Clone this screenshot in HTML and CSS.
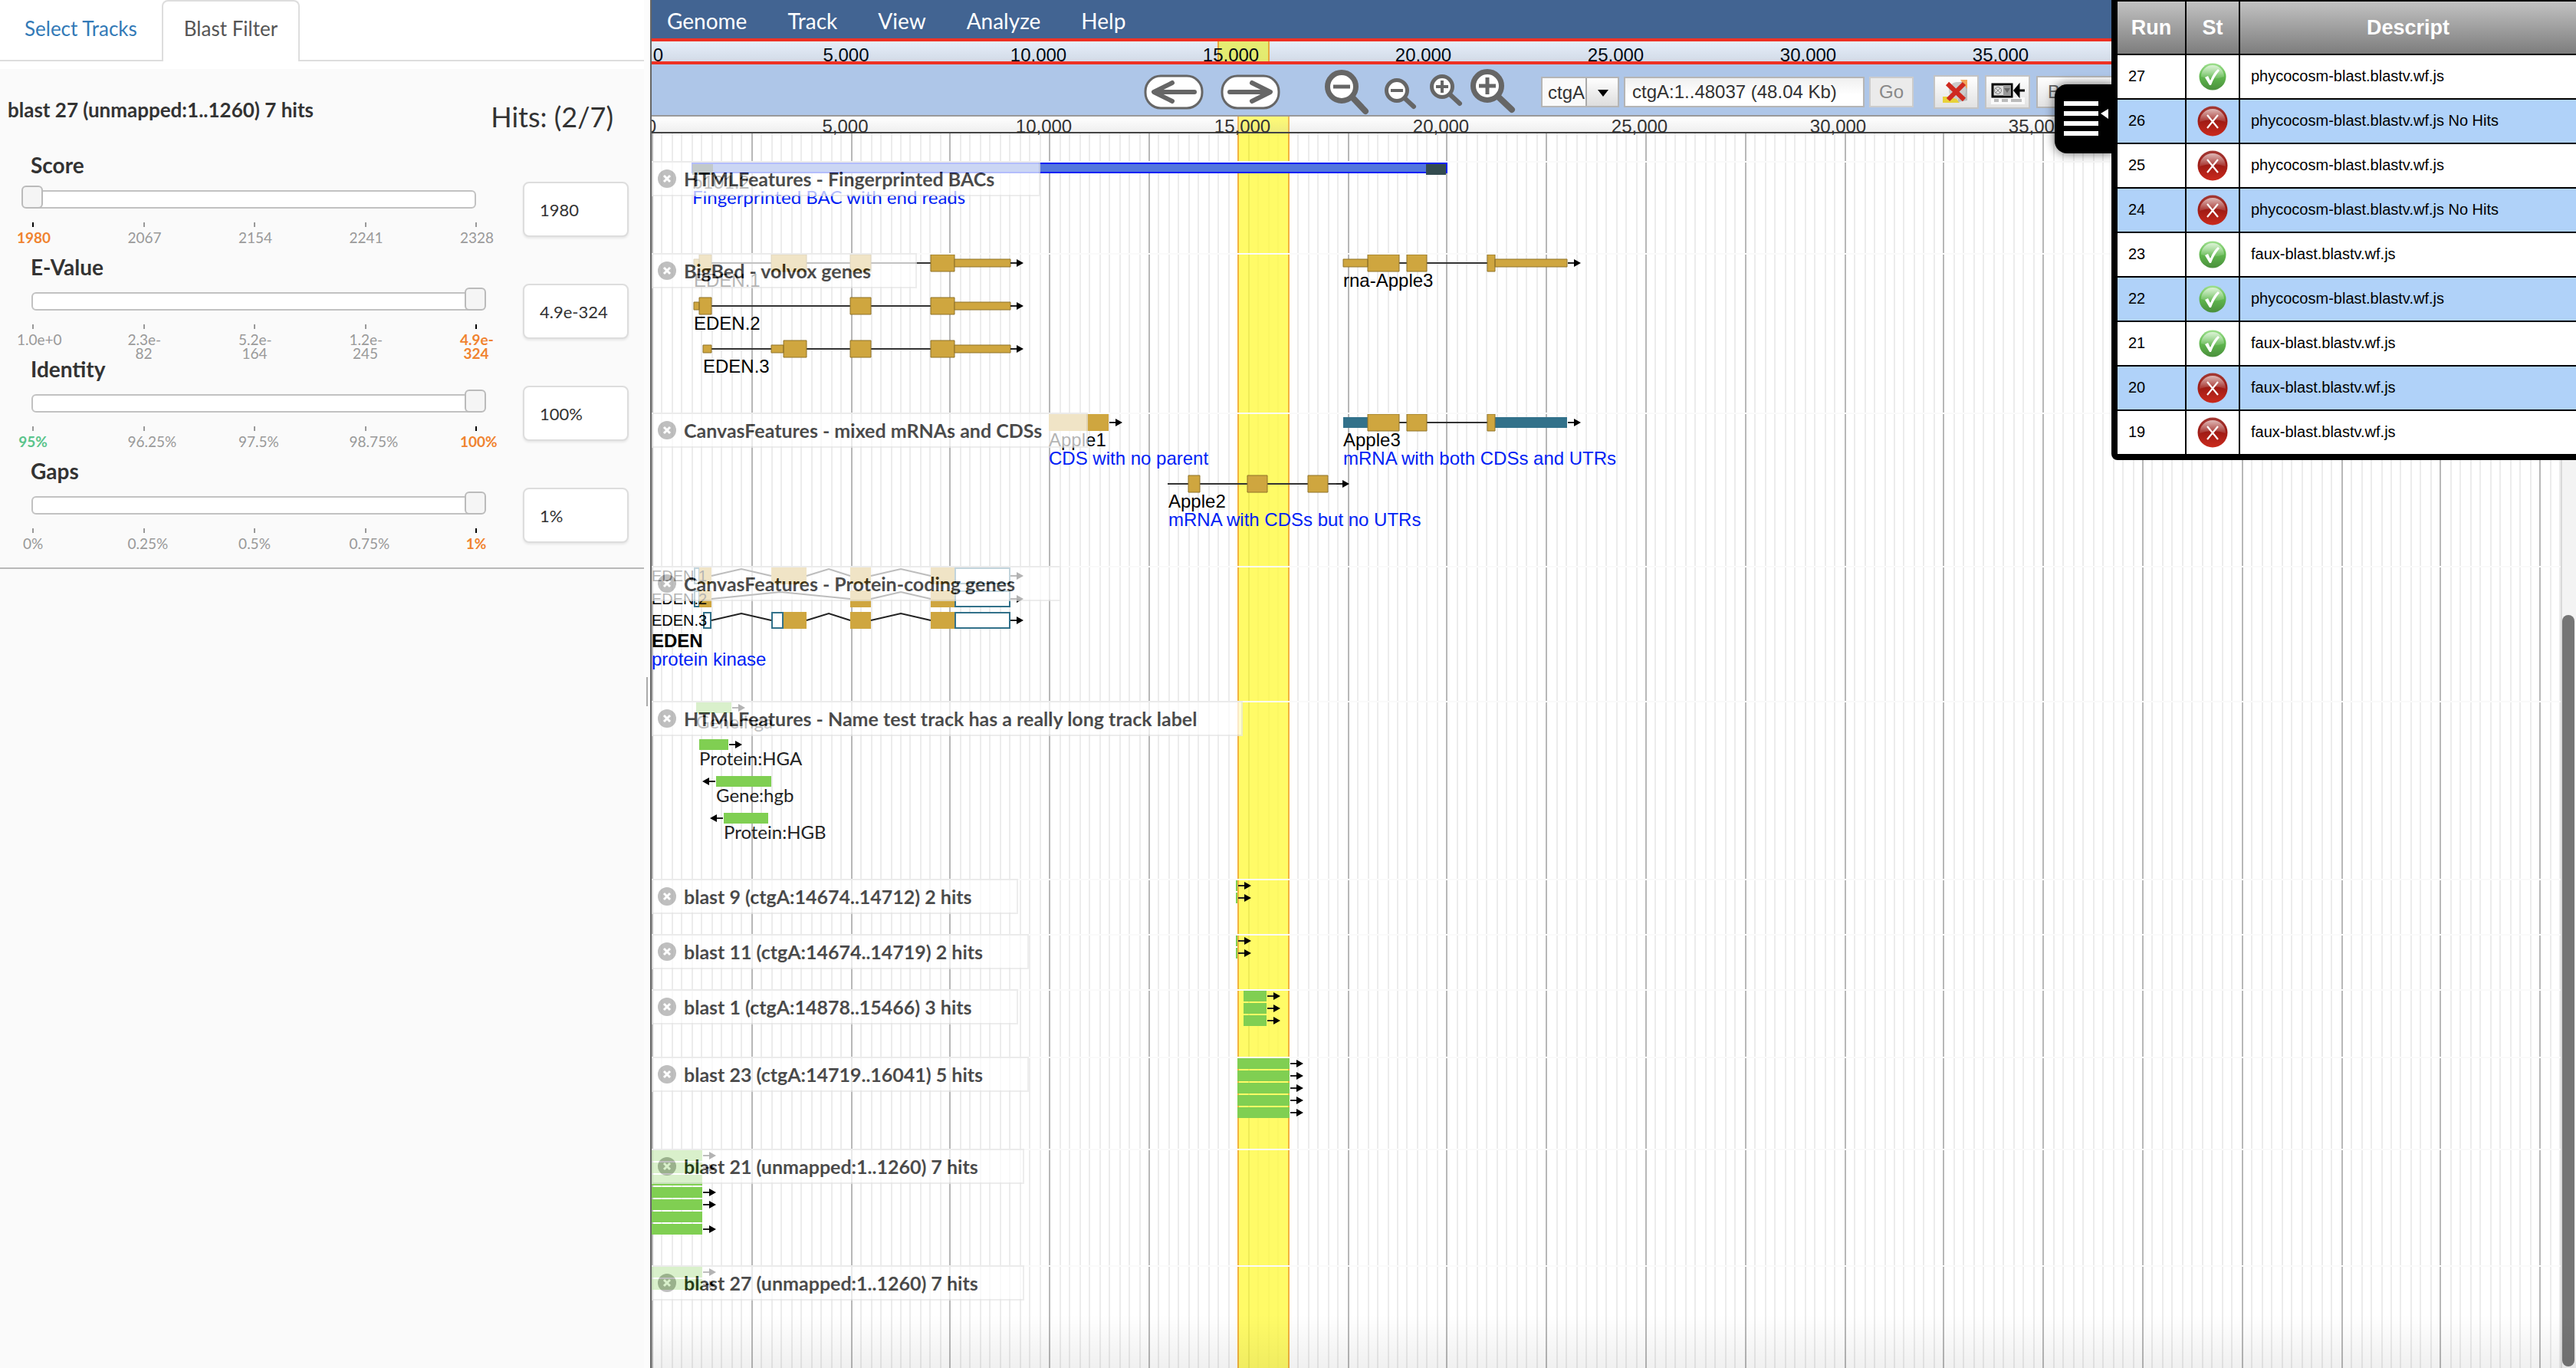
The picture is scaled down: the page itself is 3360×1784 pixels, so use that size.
FILE: index.html
```html
<!DOCTYPE html>
<html lang="en">
<head>
<meta charset="utf-8">
<title>Genome browser - blast filter</title>
<link rel="stylesheet" href="styles.css">
</head>
<body>
<svg class="defs" aria-hidden="true">
  <defs>
    <linearGradient id="green" x1="0" y1="0" x2="0" y2="1"><stop offset="0" stop-color="#9fe08f"/><stop offset=".45" stop-color="#62bb50"/><stop offset="1" stop-color="#4a8f3c"/></linearGradient>
    <linearGradient id="red" x1="0" y1="0" x2="0" y2="1"><stop offset="0" stop-color="#a33a35"/><stop offset=".45" stop-color="#9c1a14"/><stop offset="1" stop-color="#cb2a1d"/></linearGradient>
    <linearGradient id="gloss" x1="0" y1="0" x2="0" y2="1"><stop offset="0" stop-color="#fff" stop-opacity=".65"/><stop offset="1" stop-color="#fff" stop-opacity=".1"/></linearGradient>
    <symbol id="ok" viewBox="0 0 40 40"><circle cx="20" cy="20" r="17.5" fill="url(#green)"/><path d="M5 20a15 15 0 0 1 30 0q-15 5-30 0z" fill="url(#gloss)"/><path d="M10 21l4-2 3 6Q21 15 27 10l2 2Q22 20 18 31h-2z" fill="#fff"/></symbol>
    <symbol id="fail" viewBox="0 0 40 40"><circle cx="20" cy="20" r="19.5" fill="url(#red)"/><path d="M3 21a17 17 0 0 1 34 0q-17-6-34 0z" fill="url(#gloss)"/><path d="M13 12l14 17M27 12L13 29" stroke="#fff" stroke-width="2.2"/></symbol>
    <symbol id="close" viewBox="0 0 24 24"><circle cx="12" cy="12" r="12" fill="#a5a5a5"/><path d="M8 8l8 8M16 8l-8 8" stroke="#fff" stroke-width="3"/></symbol>
    <g id="arrow"><path d="M0 0h12" stroke="#222" stroke-width="2"/><path d="M8-5l9 5-9 5z"/></g>
    <g id="arrow-left"><path d="M0 0h-12" stroke="#222" stroke-width="2"/><path d="M-8-5l-9 5 9 5z"/></g>
    <g id="gene-tail"><path class="cds" d="M364-11h31v22h-31z"/><path class="cds" d="M395-5h73V5h-73z"/><use href="#arrow" x="468"/></g>
    <g id="coding-tail"><path class="box" d="M259-11h27v22h-27zM364-11h31v22h-31z"/><path class="utr" d="M396-10h71v20h-71z"/><path class="intron" d="M286 0l39-9 39 9"/><use href="#arrow" x="468"/></g>
  </defs>
</svg>

<div class="app">
  <aside class="side">
    <nav class="tabs">
      <a class="tab" href="#tracks">Select Tracks</a>
      <a class="tab tab-on" href="#filter">Blast Filter</a>
    </nav>
    <section class="filter">
      <header class="filter-head">
        <h2 class="filter-title">blast 27 (unmapped:1..1260) 7 hits</h2>
        <span class="hits">Hits: (2/7)</span>
      </header>
      <div class="control">
        <div class="scale">
          <label class="name" for="score">Score</label>
          <div class="slider"><input id="score" type="range" min="1980" max="2328" value="1980"></div>
          <ol class="pips"><li class="now">1980</li><li>2067</li><li>2154</li><li>2241</li><li>2328</li></ol>
        </div>
        <input class="value" type="text" value="1980" aria-label="Score value">
      </div>
      <div class="control">
        <div class="scale">
          <label class="name" for="evalue">E-Value</label>
          <div class="slider"><input id="evalue" type="range" min="0" max="324" value="324"></div>
          <ol class="pips"><li>1.0e+0</li><li>2.3e-82</li><li>5.2e-164</li><li>1.2e-245</li><li class="now">4.9e-324</li></ol>
        </div>
        <input class="value" type="text" value="4.9e-324" aria-label="E-Value value">
      </div>
      <div class="control">
        <div class="scale">
          <label class="name" for="identity">Identity</label>
          <div class="slider"><input id="identity" type="range" min="95" max="100" value="100"></div>
          <ol class="pips"><li class="low">95%</li><li>96.25%</li><li>97.5%</li><li>98.75%</li><li class="now">100%</li></ol>
        </div>
        <input class="value" type="text" value="100%" aria-label="Identity value">
      </div>
      <div class="control">
        <div class="scale">
          <label class="name" for="gaps">Gaps</label>
          <div class="slider"><input id="gaps" type="range" min="0" max="1" value="1"></div>
          <ol class="pips"><li>0%</li><li>0.25%</li><li>0.5%</li><li>0.75%</li><li class="now">1%</li></ol>
        </div>
        <input class="value" type="text" value="1%" aria-label="Gaps value">
      </div>
    </section>
  </aside>
  <div class="splitter"><i class="grip"></i></div>

  <main class="browser">
    <nav class="menu">
      <button>Genome</button><button>Track</button><button>View</button><button>Analyze</button><button>Help</button>
    </nav>
    <div class="overview">
      <i class="region"></i>
      <span class="origin">0</span><span>5,000</span><span>10,000</span><span>15,000</span><span>20,000</span><span>25,000</span><span>30,000</span><span>35,000</span>
    </div>
    <div class="toolbar">
      <div class="pan">
        <button class="icon" aria-label="Pan left"><svg width="78" height="46"><rect x="2" y="2" width="74" height="42" rx="20" fill="#fff" stroke="#666" stroke-width="3"/><path d="M66 23H14M37 11L13 23l24 12" fill="none" stroke="#666" stroke-width="6" stroke-linecap="round" stroke-linejoin="round"/></svg></button>
        <button class="icon" aria-label="Pan right"><svg width="78" height="46"><rect x="2" y="2" width="74" height="42" rx="20" fill="#fff" stroke="#666" stroke-width="3"/><path d="M12 23h52M41 11l24 12-24 12" fill="none" stroke="#666" stroke-width="6" stroke-linecap="round" stroke-linejoin="round"/></svg></button>
      </div>
      <div class="zoom">
        <button class="icon" aria-label="Zoom out far"><svg width="58" height="58"><path d="M36 36l17 18" stroke="#666" stroke-width="8" stroke-linecap="round"/><circle cx="22" cy="22" r="18.5" fill="#fff" stroke="#666" stroke-width="7"/><path d="M11 22h22" stroke="#666" stroke-width="5"/></svg></button>
        <button class="icon" aria-label="Zoom out"><svg width="44" height="44"><path d="M29 29l13 12" stroke="#666" stroke-width="6" stroke-linecap="round"/><circle cx="20" cy="20" r="13.5" fill="#fff" stroke="#666" stroke-width="5"/><path d="M12 20h16" stroke="#666" stroke-width="4"/></svg></button>
        <button class="icon" aria-label="Zoom in"><svg width="44" height="44"><path d="M28 24l14 13" stroke="#666" stroke-width="6" stroke-linecap="round"/><circle cx="19" cy="15" r="13.5" fill="#fff" stroke="#666" stroke-width="5"/><path d="M11 15h16M19 7v16" stroke="#666" stroke-width="4"/></svg></button>
        <button class="icon" aria-label="Zoom in far"><svg width="58" height="58"><path d="M32 35l18 17" stroke="#666" stroke-width="8" stroke-linecap="round"/><circle cx="18" cy="21" r="18.5" fill="#fff" stroke="#666" stroke-width="7"/><path d="M7 21h22M18 10v22" stroke="#666" stroke-width="5"/></svg></button>
      </div>
      <div class="locate">
        <select class="field refseq" aria-label="Reference sequence"><option>ctgA</option></select>
        <input class="field location" type="text" value="ctgA:1..48037 (48.04 Kb)" aria-label="Location">
        <button class="field go" disabled>Go</button>
      </div>
      <div class="tools">
        <button class="field tool" aria-label="Clear highlight"><svg width="36" height="32"><path d="M0 22h16l6 8H0z" fill="#e8d23a"/><path d="M18 4L32 1v26l-12 2z" fill="#bbb"/><path d="M23 0h9v12z" fill="#f2a65a"/><circle cx="19" cy="14" r="11" fill="#ccc"/><path d="M6 5l22 21M28 5L7 26" stroke="#cf2a20" stroke-width="6"/></svg></button>
        <button class="field tool" aria-label="Toggle track labels"><svg width="44" height="26"><rect x="0" y="20" width="44" height="9" fill="#fafafa"/><rect x="2" y="3" width="25" height="16" fill="#ddd" stroke="#000" stroke-width="3"/><path d="M16 4h10v14H16z" fill="#999"/><path d="M17 8h8l-4 6z" fill="#666"/><circle cx="9" cy="11" r="4.5" fill="none" stroke="#888"/><path d="M6 8l6 6M12 8l-6 6" stroke="#888"/><path d="M34 11h10M36 5l-5 6 5 6z" stroke="#000" stroke-width="3"/><path d="M4 24h6M14 24h8M26 24h14" stroke="#bbb" stroke-width="4"/></svg></button>
        <button class="field blast">BLAST</button>
      </div>
    </div>
    <div class="view">
      <svg class="grid" id="grid" aria-hidden="true"></svg>
      <i class="highlight"></i>
      <div class="ruler">
        <span class="origin">0</span><span>5,000</span><span>10,000</span><span>15,000</span><span>20,000</span><span>25,000</span><span>30,000</span><span>35,000</span>
      </div>
      <div class="tracks">
        <section class="track h120">
          <svg class="features">
            <rect x="53" y="1" width="984" height="12" fill="#5276dd" stroke="#0021f5" stroke-width="2"/>
            <path d="M53 2h27v14H53zM1010 2h26v14h-26z" fill="#334b4f"/>
            <text class="ui" x="53" y="34">b101.2</text><text class="ui note" x="53" y="54">Fingerprinted BAC with end reads</text>
          </svg>
          <h3 class="label"><svg class="x"><use href="#close"/></svg>HTMLFeatures - Fingerprinted BACs</h3>
        </section>
        <section class="track h208">
          <svg class="features">
            <g transform="translate(0 11)"><path class="line" d="M55 0h413"/><path class="cds" d="M55-5h7V5h-7zM62-11h16v22H62zM156-11h46v22h-46zM259-11h27v22h-27z"/><use href="#gene-tail"/></g>
            <g transform="translate(0 67)"><path class="line" d="M55 0h413"/><path class="cds" d="M55-5h7V5h-7zM62-11h16v22H62zM259-11h27v22h-27z"/><use href="#gene-tail"/></g>
            <g transform="translate(0 123)"><path class="line" d="M67 0h401"/><path class="cds" d="M67-5h11V5H67zM156-5h16V5h-16zM172-11h30v22h-30zM259-11h27v22h-27z"/><use href="#gene-tail"/></g>
            <g transform="translate(0 11)"><path class="line" d="M902 0h292"/><path class="cds" d="M902-5h32V5h-32zM934-11h41v22h-41zM985-11h26v22h-26zM1100-5h94V5h-94zM1090-11h10v22h-10z"/><use href="#arrow" x="1195"/></g>
            <text x="55" y="42">EDEN.1</text><text x="55" y="98">EDEN.2</text><text x="67" y="154">EDEN.3</text><text x="902" y="42">rna-Apple3</text>
          </svg>
          <h3 class="label"><svg class="x"><use href="#close"/></svg>BigBed - volvox genes</h3>
        </section>
        <section class="track h200">
          <svg class="features">
            <path class="box" d="M518 0h78v22h-78z"/><use href="#arrow" x="597" y="11"/>
            <g transform="translate(0 91)"><path class="line" d="M673 0h222"/><path class="cds" d="M700-11h15v22h-15zM777-11h26v22h-26zM856-11h26v22h-26z"/><use href="#arrow" x="893"/></g>
            <g transform="translate(0 11)"><path class="line" d="M934 0h156"/><path fill="#32718a" d="M902-7h32V7h-32zM1100-7h94V7h-94z"/><path class="cds" d="M934-11h41v22h-41zM985-11h26v22h-26zM1090-11h10v22h-10z"/><use href="#arrow" x="1195"/></g>
            <text x="518" y="42">Apple1</text><text class="note" x="518" y="66">CDS with no parent</text>
            <text x="674" y="122">Apple2</text><text class="note" x="674" y="146">mRNA with CDSs but no UTRs</text>
            <text x="902" y="42">Apple3</text><text class="note" x="902" y="66">mRNA with both CDSs and UTRs</text>
          </svg>
          <h3 class="label"><svg class="x"><use href="#close"/></svg>CanvasFeatures - mixed mRNAs and CDSs</h3>
        </section>
        <section class="track h176">
          <svg class="features">
            <g transform="translate(0 11)"><path class="utr" d="M56-10h6v20h-6z"/><path class="box" d="M62-11h16v22H62zM156-11h46v22h-46z"/><path class="intron" d="M78 0l39-9 39 9M202 0l29-9 28 9"/><use href="#coding-tail"/></g>
            <g transform="translate(0 41)"><path class="utr" d="M56-10h6v20h-6z"/><path class="box" d="M62-11h16v22H62z"/><path class="intron" d="M78 0l90-9 91 9"/><use href="#coding-tail"/></g>
            <g transform="translate(0 69)"><path class="utr" d="M68-10h9v20h-9zM157-10h14v20h-14z"/><path class="box" d="M172-11h30v22h-30z"/><path class="intron" d="M78 0l39-9 39 9M202 0l29-9 28 9"/><use href="#coding-tail"/></g>
            <text class="small" x="0" y="18">EDEN.1</text><text class="small" x="0" y="48">EDEN.2</text><text class="small" x="0" y="76">EDEN.3</text>
            <text class="strong" x="0" y="104">EDEN</text><text class="note" x="0" y="128">protein kinase</text>
          </svg>
          <h3 class="label"><svg class="x"><use href="#close"/></svg>CanvasFeatures - Protein-coding genes</h3>
        </section>
        <section class="track h232">
          <svg class="features">
            <path class="hit" d="M58 0h46v14H58zM62 48h38v14H62zM84 96h72v14H84zM94 144h58v14H94z"/>
            <use href="#arrow" x="105" y="7"/><use href="#arrow" x="101" y="55"/><use href="#arrow-left" x="83" y="103"/><use href="#arrow-left" x="93" y="151"/>
            <text class="ui" x="58" y="34">Gene:hga</text><text class="ui" x="62" y="82">Protein:HGA</text><text class="ui" x="84" y="130">Gene:hgb</text><text class="ui" x="94" y="178">Protein:HGB</text>
          </svg>
          <h3 class="label"><svg class="x"><use href="#close"/></svg>HTMLFeatures - Name test track has a really long track label</h3>
        </section>
        <section class="track h72">
          <svg class="features"><path class="hit" d="M762 0h2v14h-2zM762 16h2v14h-2z"/><use href="#arrow" x="765" y="7"/><use href="#arrow" x="765" y="23"/></svg>
          <h3 class="label"><svg class="x"><use href="#close"/></svg>blast 9 (ctgA:14674..14712) 2 hits</h3>
        </section>
        <section class="track h72">
          <svg class="features"><path class="hit" d="M762 0h2v14h-2zM762 16h2v14h-2z"/><use href="#arrow" x="765" y="7"/><use href="#arrow" x="765" y="23"/></svg>
          <h3 class="label"><svg class="x"><use href="#close"/></svg>blast 11 (ctgA:14674..14719) 2 hits</h3>
        </section>
        <section class="track h88">
          <svg class="features"><path class="hit" d="M772 0h30v14h-30zM772 16h30v14h-30zM772 32h30v14h-30z"/><use href="#arrow" x="803" y="7"/><use href="#arrow" x="803" y="23"/><use href="#arrow" x="803" y="39"/></svg>
          <h3 class="label"><svg class="x"><use href="#close"/></svg>blast 1 (ctgA:14878..15466) 3 hits</h3>
        </section>
        <section class="track h120">
          <svg class="features"><path class="hit" d="M764 0h68v14h-68zM764 16h68v14h-68zM764 32h68v14h-68zM764 48h68v14h-68zM764 64h68v14h-68z"/><use href="#arrow" x="833" y="7"/><use href="#arrow" x="833" y="23"/><use href="#arrow" x="833" y="39"/><use href="#arrow" x="833" y="55"/><use href="#arrow" x="833" y="71"/></svg>
          <h3 class="label"><svg class="x"><use href="#close"/></svg>blast 23 (ctgA:14719..16041) 5 hits</h3>
        </section>
        <section class="track h152">
          <svg class="features"><path class="hit" d="M0 0h66v14H0zM0 16h66v14H0zM0 32h66v14H0zM0 48h66v14H0zM0 64h66v14H0zM0 80h66v14H0zM0 96h66v14H0z"/><use href="#arrow" x="67" y="7"/><use href="#arrow" x="67" y="23"/><use href="#arrow" x="67" y="55"/><use href="#arrow" x="67" y="71"/><use href="#arrow" x="67" y="103"/></svg>
          <h3 class="label"><svg class="x"><use href="#close"/></svg>blast 21 (unmapped:1..1260) 7 hits</h3>
        </section>
        <section class="track h120">
          <svg class="features"><path class="hit" d="M0 0h66v14H0zM0 16h66v14H0z"/><use href="#arrow" x="67" y="7"/><use href="#arrow" x="67" y="23"/></svg>
          <h3 class="label"><svg class="x"><use href="#close"/></svg>blast 27 (unmapped:1..1260) 7 hits</h3>
        </section>
      </div>
      <div class="scrollbar"><i class="thumb"></i></div>
      <i class="fade"></i>
    </div>
  </main>
</div>

<aside class="runs">
  <button class="runs-toggle" aria-label="Toggle run list"><svg width="58" height="48"><path d="M0 4h45M0 17h45M0 30h45M0 43h45" stroke="#fff" stroke-width="6"/><path d="M58 11v13l-10-7z" fill="#fff"/></svg></button>
  <table class="runs-table">
    <thead><tr><th class="c-run">Run</th><th class="c-st">St</th><th>Descript</th></tr></thead>
    <tbody>
      <tr><td>27</td><td class="st"><svg><use href="#ok"/></svg></td><td>phycocosm-blast.blastv.wf.js</td></tr>
      <tr><td>26</td><td class="st"><svg><use href="#fail"/></svg></td><td>phycocosm-blast.blastv.wf.js No Hits</td></tr>
      <tr><td>25</td><td class="st"><svg><use href="#fail"/></svg></td><td>phycocosm-blast.blastv.wf.js</td></tr>
      <tr><td>24</td><td class="st"><svg><use href="#fail"/></svg></td><td>phycocosm-blast.blastv.wf.js No Hits</td></tr>
      <tr><td>23</td><td class="st"><svg><use href="#ok"/></svg></td><td>faux-blast.blastv.wf.js</td></tr>
      <tr><td>22</td><td class="st"><svg><use href="#ok"/></svg></td><td>phycocosm-blast.blastv.wf.js</td></tr>
      <tr><td>21</td><td class="st"><svg><use href="#ok"/></svg></td><td>faux-blast.blastv.wf.js</td></tr>
      <tr><td>20</td><td class="st"><svg><use href="#fail"/></svg></td><td>faux-blast.blastv.wf.js</td></tr>
      <tr><td>19</td><td class="st"><svg><use href="#fail"/></svg></td><td>faux-blast.blastv.wf.js</td></tr>
    </tbody>
  </table>
</aside>
<script src="script.js"></script>
</body>
</html>
```

FILE: styles.css
```css
* { box-sizing: border-box; }
html, body { height: 100%; margin: 0; overflow: hidden; }
body { font-family: Lato, "Liberation Sans", sans-serif; font-size: 24px; color: #333; background: #fff; }
button { font: inherit; border: 0; padding: 0; background: none; color: inherit; }
.defs { position: absolute; width: 0; height: 0; }
.app { display: flex; height: 100%; }

/* side panel */
.side { flex: 0 0 25%; background: #fafafa; }
.tabs { display: flex; height: 90px; background: #fff; box-shadow: inset 0 -10px #fff, inset 0 -12px #ddd; }
.tab { height: 78px; line-height: 70px; padding: 0 30px; font-size: 26px; color: #337ab7; text-decoration: none; border: 2px solid transparent; border-bottom: 0; }
.tab-on { color: #555; background: #fff; border-color: #ddd; border-radius: 8px 8px 0 0; height: 80px; padding: 0 27px; }
.filter { padding-bottom: 13px; border-bottom: 2px solid #b9b9b9; }
.filter-head { display: flex; justify-content: space-between; align-items: flex-start; height: 105px; padding: 36px 40px 0 10px; }
.filter-title { margin: 0; font-size: 26px; line-height: 34px; font-weight: 700; }
.hits { font-size: 36px; line-height: 52px; }
.control { display: flex; height: 133px; padding-left: 22px; }
.scale { width: 620px; }
.name { display: block; height: 47px; line-height: 40px; padding-left: 18px; font-size: 28px; font-weight: 700; }
.slider { position: relative; height: 30px; margin: 0 8px 0 6px; }
.slider::before { content: ""; position: absolute; left: 13px; right: 13px; top: 6px; height: 20px; background: #fff; border: 2px solid #c2c2c2; border-radius: 6px; }
.slider input { position: relative; display: block; width: 100%; height: 30px; margin: 0; background: none; appearance: none; }
.slider input::-webkit-slider-thumb { appearance: none; width: 28px; height: 30px; background: #f5f5f5; border: 2px solid #bbb; border-radius: 6px; }
.pips { display: flex; justify-content: space-between; list-style: none; margin: 18px 0 0; padding: 0; font-size: 19px; line-height: 18px; color: #999; }
.pips li { width: 42px; text-align: center; }
.pips li::before { content: ""; display: block; width: 2px; height: 6px; margin: 0 auto 5px; background: #999; }
.pips .now { color: #f08330; font-weight: 700; }
.pips .now::before { background: #000; }
.pips .low { color: #5ac48b; font-weight: 700; }
.value { width: 138px; height: 72px; margin: 42px 0 0 40px; padding: 0 20px; font: inherit; font-size: 22px; color: #333; background: #fff; border: 2px solid #ddd; border-radius: 8px; box-shadow: 0 2px 3px rgba(0,0,0,.08); }

.splitter { flex: 0 0 10px; background: #fcfcfc; border-right: 2px solid #666; display: flex; align-items: center; justify-content: center; padding-top: 20px; }
.grip { width: 2px; height: 38px; background: #aaa; }

/* browser */
.browser { flex: 1; min-width: 0; display: flex; flex-direction: column; }
.menu { display: flex; gap: 53px; height: 50px; padding: 2px 20px 0; background: #426492; color: #fff; font-size: 28px; line-height: 50px; }
.overview, .ruler { position: relative; display: flex; font-family: "Liberation Sans", Arial, sans-serif; font-size: 24px; }
.overview { height: 34px; overflow: hidden; background: linear-gradient(#e6eefa, #d2dbe7); border: solid #ee3124; border-width: 4px 0; line-height: 36px; color: #000a14; }
.overview span { flex: 0 0 251px; text-align: center; position: relative; left: -123px; }
.overview .origin { padding-left: 12px; }
.region { position: absolute; left: 738px; top: 0; width: 68px; height: 26px; background: rgba(230,236,80,.8); border: solid #e8a83c; border-width: 0 2px; }
.toolbar { display: flex; align-items: center; height: 68px; padding: 6px 0 0 642px; background: #aec6e8; border-bottom: 2px solid #999; }
.toolbar svg, .runs svg { display: block; overflow: visible; }
.pan, .zoom, .locate, .tools { display: flex; align-items: center; flex: none; }
.pan { gap: 22px; }
.zoom { gap: 16px; margin-left: 58px; }
.locate { gap: 6px; margin-left: 30px; }
.tools { gap: 8px; margin-left: 26px; }
.field { font-family: "Liberation Sans", Arial, sans-serif; font-size: 24px; height: 40px; border: 2px solid #b5b5b5; color: #333; background: linear-gradient(#f0f0f0, #fff 60%); }
.refseq { width: 102px; padding: 0 0 0 7px; appearance: none; background: #fafafa url("data:image/svg+xml,%3Csvg xmlns='http://www.w3.org/2000/svg' width='42' height='36'%3E%3Cdefs%3E%3ClinearGradient id='g' x2='0' y2='1'%3E%3Cstop stop-color='%23fff'/%3E%3Cstop offset='1' stop-color='%23ddd'/%3E%3C/linearGradient%3E%3C/defs%3E%3Cpath d='M0 0h42v36H0z' fill='url(%23g)'/%3E%3Cpath d='M1 0v36' stroke='%23aaa' stroke-width='2'/%3E%3Cpath d='M16 15h14l-7 9z'/%3E%3C/svg%3E") right center no-repeat; }
.location { width: 314px; padding: 0 9px; }
.go { width: 58px; color: #888; background: #ebebeb; border-color: #ccc; }
.tool { width: 59px; height: 44px; display: grid; place-items: center; background: linear-gradient(#fff, #e2e2e2); border-color: #c4c4c4; }
.blast { width: 110px; height: 42px; padding-left: 13px; text-align: left; color: #666; background: linear-gradient(#fff, #e2e2e2); }

.view { position: relative; flex: 1; overflow: hidden; }
.grid { position: absolute; left: 0; top: 22px; width: 100%; height: 100%; }
.grid .minor { fill: #ececec; }
.grid .major { fill: #b8b8b8; }
.highlight { position: absolute; left: 764px; top: 0; bottom: 0; width: 68px; background: rgba(255,250,60,.78); border: solid #f2b33f; border-width: 0 2px; }
.ruler { height: 22px; background: linear-gradient(rgba(255,255,255,.1), rgba(190,190,190,.25)); border-bottom: 2px solid #444; line-height: 26px; }
.ruler span { flex: 0 0 259px; text-align: center; position: relative; left: -136px; }
.ruler .origin { padding-left: 12px; }
.tracks { position: relative; padding-top: 36px; }
.track { position: relative; border-top: 2px solid #fafafa; }
.features { display: block; width: 100%; height: 100%; overflow: hidden; font-family: "Liberation Sans", Arial, sans-serif; font-size: 24px; }
.h72 { height: 72px; } .h88 { height: 88px; } .h120 { height: 120px; } .h152 { height: 152px; }
.h176 { height: 176px; } .h200 { height: 200px; } .h208 { height: 208px; } .h232 { height: 232px; }
.label { position: absolute; left: 0; top: -2px; display: flex; align-items: center; gap: 10px; height: 46px; margin: 0; padding: 0 58px 0 6px; font-size: 25px; font-weight: 700; color: #000; background: #fff; border: 2px solid #e6e6e6; opacity: .7; white-space: nowrap; }
.x { width: 24px; height: 24px; }
.line { stroke: #333; stroke-width: 2; }
.cds { fill: #cfa63f; stroke: #8f7328; stroke-width: 1; }
.box { fill: #cfa63f; }
.utr { fill: #fff; stroke: #32718a; stroke-width: 2; }
.intron { fill: none; stroke: #222; stroke-width: 2; }
.hit { fill: #80cf52; }
.features .ui { font-family: Lato, sans-serif; fill: #222; }
.features .note { fill: #0021f5; }
.features .small { font-size: 20px; }
.features .strong { font-weight: 700; }
.scrollbar { position: absolute; right: 0; top: 0; bottom: 0; width: 20px; padding: 650px 2px 2px 0; background: #f3f3f3; border-left: 2px solid #d9d9d9; }
.thumb { display: block; height: 100%; background: #757575; border-radius: 8px; }
.fade { position: absolute; left: 0; right: 0; bottom: 0; height: 70px; background: linear-gradient(transparent, rgba(0,0,0,.06)); }

/* run list */
.runs { position: absolute; top: 0; right: 0; width: 606px; border: solid #000; border-width: 2px 0 6px 8px; border-radius: 0 0 0 8px; background: #000; font-family: "Liberation Sans", Arial, sans-serif; }
.runs-toggle { position: absolute; left: -82px; top: 108px; width: 78px; height: 90px; padding-left: 12px; background: #000; border-radius: 16px 0 0 16px; box-shadow: 0 0 14px rgba(0,0,0,.6); clip-path: inset(-20px 4px -20px -20px); }
.runs-table { width: 100%; table-layout: fixed; border-collapse: separate; border-spacing: 0; color: #000; font-size: 20px; }
.runs-table th, .runs-table td { border: solid #000; border-width: 0 2px 2px 0; }
.runs-table th:last-child, .runs-table td:last-child { border-right: 0; }
.runs-table th { height: 70px; padding: 0; font-size: 27px; color: #fff; background: linear-gradient(#c2c2c2, #7d7d7d); }
.runs-table td { height: 58px; padding: 0 14px 2px; background: #fff; }
.runs-table tr:nth-child(even) td { background: #b0d2f9; }
.c-run { width: 90px; }
.c-st { width: 70px; }
.runs-table .st { padding: 0; }
.st svg { width: 40px; height: 40px; margin: 0 auto; }
```

FILE: script.js
```js
// Grid lines: one every 250 bp, every tenth is a major line.
const svg = document.getElementById('grid');
const pxPerMinor = 12.96;
for (let i = 0; i < 200; i++) {
  const rect = document.createElementNS('http://www.w3.org/2000/svg', 'rect');
  rect.setAttribute('x', 2 * Math.round(i * pxPerMinor / 2));
  rect.setAttribute('width', 2);
  rect.setAttribute('height', '100%');
  rect.setAttribute('class', i % 10 ? 'minor' : 'major');
  svg.appendChild(rect);
}
```
